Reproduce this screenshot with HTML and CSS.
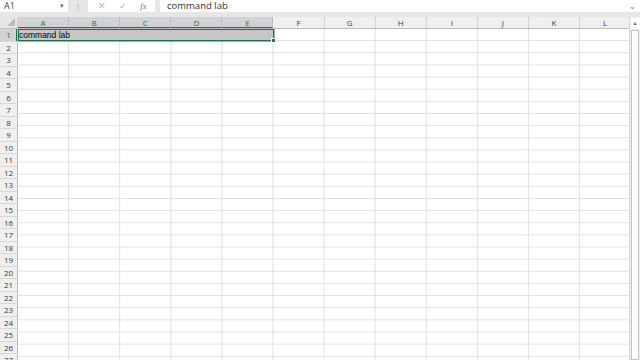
FILE: index.html
```html
<!DOCTYPE html>
<html>
<head>
<meta charset="UTF-8">
<title>Book1 - Excel</title>
<link rel="stylesheet" href="styles.css">
</head>
<body>

	<!-- 수식 입력줄 -->
	<div class="formula-bar">
		<div class="name-box">
			<span>A1</span>
			<span class="name-arrow">&#9662;</span>
		</div>
		<div class="bar-dots">&#8942;</div>
		<div class="bar-buttons">
			<span class="bar-btn">&#10005;</span>
			<span class="bar-btn">&#10003;</span>
			<span class="bar-btn fx">fx</span>
		</div>
		<div class="formula-input">
			<span>command lab</span>
			<span class="expand">&#8964;</span>
		</div>
	</div>

	<div class="band"></div>

	<div class="sheet">
		<div class="corner"><span class="corner-tri"></span></div>

		<div class="col-heads">
			<div class="col-head sel">A</div>
			<div class="col-head sel">B</div>
			<div class="col-head sel">C</div>
			<div class="col-head sel">D</div>
			<div class="col-head sel">E</div>
			<div class="col-head">F</div>
			<div class="col-head">G</div>
			<div class="col-head">H</div>
			<div class="col-head">I</div>
			<div class="col-head">J</div>
			<div class="col-head">K</div>
			<div class="col-head">L</div>
		</div>

		<div class="vscroll">
			<div class="scroll-up">&#9650;</div>
			<div class="scroll-thumb"></div>
		</div>

		<div class="row-heads">
			<div class="row-head sel">1</div>
			<div class="row-head">2</div>
			<div class="row-head">3</div>
			<div class="row-head">4</div>
			<div class="row-head">5</div>
			<div class="row-head">6</div>
			<div class="row-head">7</div>
			<div class="row-head">8</div>
			<div class="row-head">9</div>
			<div class="row-head">10</div>
			<div class="row-head">11</div>
			<div class="row-head">12</div>
			<div class="row-head">13</div>
			<div class="row-head">14</div>
			<div class="row-head">15</div>
			<div class="row-head">16</div>
			<div class="row-head">17</div>
			<div class="row-head">18</div>
			<div class="row-head">19</div>
			<div class="row-head">20</div>
			<div class="row-head">21</div>
			<div class="row-head">22</div>
			<div class="row-head">23</div>
			<div class="row-head">24</div>
			<div class="row-head">25</div>
			<div class="row-head">26</div>
			<div class="row-head">27</div>
		</div>

		<div class="cells">
			<div class="selection">
				<span class="cell-text">command lab</span>
				<span class="fill-handle"></span>
			</div>
		</div>
	</div>

</body>
</html>
```

FILE: styles.css
```css
body {
	margin: 0;
	width: 640px;
	height: 360px;
	overflow: hidden;
	background-color: #fff;
	font-family: "Open Sans", "Liberation Sans", sans-serif;
}

/* ---- 수식 입력줄 ---- */
.formula-bar {
	display: flex;
	height: 12px;
	background-color: #e6e6e6;
}

.name-box {
	width: 68px;
	background-color: #fff;
	display: flex;
	justify-content: space-between;
	align-items: center;
	padding: 0 4px 0 4px;
	box-sizing: border-box;
	font-size: 9px;
	line-height: 12px;
	color: #444;
}

.name-arrow {
	font-size: 7px;
	color: #666;
}

.bar-dots {
	width: 20px;
	text-align: center;
	font-size: 8px;
	line-height: 12px;
	color: #9a9a9a;
}

.bar-buttons {
	width: 67px;
	background-color: #fff;
	display: flex;
	justify-content: space-around;
	align-items: center;
	padding: 0 2px 0 4px;
	box-sizing: border-box;
}

.bar-btn {
	font-size: 9px;
	color: #b4b4b4;
	line-height: 12px;
}

.bar-btn.fx {
	font-family: "Liberation Serif", serif;
	font-style: italic;
	color: #777;
}

.formula-input {
	flex: 1;
	margin-left: 5px;
	background-color: #fff;
	display: flex;
	justify-content: space-between;
	align-items: center;
	padding: 0 4px 0 7px;
	font-size: 9.5px;
	line-height: 12px;
	color: #333;
}

.expand {
	font-size: 8px;
	line-height: 8px;
	color: #777;
}

.band {
	height: 5px;
	background-color: #e6e6e6;
}

/* ---- 시트 ---- */
.sheet {
	display: grid;
	grid-template-columns: 18px 611px 11px;
	grid-template-rows: 12px 331px;
}

.corner {
	background-color: #e6e6e6;
	border-right: solid 1px #cfcfcf;
	border-bottom: solid 1px #bdbdbd;
	box-sizing: border-box;
	position: relative;
}

.corner-tri {
	position: absolute;
	right: 2px;
	bottom: 2px;
	width: 0;
	height: 0;
	border-left: solid 8px transparent;
	border-bottom: solid 8px #b9b9b9;
}

.col-heads {
	display: flex;
	overflow: hidden;
	background-color: #efefef;
	border-bottom: solid 1px #bdbdbd;
	box-sizing: border-box;
}

.col-head {
	flex: 0 0 51.1px;
	box-sizing: border-box;
	border-right: solid 1px #d4d4d4;
	text-align: center;
	font-size: 8px;
	line-height: 11px;
	color: #3a3a3a;
}

.col-head.sel {
	background-color: #d2d2d2;
	color: #217346;
	border-right-color: #bdbdbd;
	border-bottom: solid 1px #217346;
}

.vscroll {
	grid-row: 1 / 3;
	grid-column: 3;
	background-color: #f0f0f0;
	border-left: solid 1px #d6d6d6;
	box-sizing: border-box;
	display: flex;
	flex-direction: column;
	align-items: center;
}

.scroll-up {
	width: 9px;
	height: 11px;
	margin-top: 1px;
	background-color: #fff;
	text-align: center;
	font-size: 5px;
	line-height: 10px;
	color: #606060;
}

.scroll-thumb {
	flex: 1;
	width: 8px;
	margin-top: 1px;
	background-color: #fff;
	border: solid 1px #c2c2c2;
	box-sizing: border-box;
}

.row-heads {
	display: flex;
	flex-direction: column;
	overflow: hidden;
	background-color: #efefef;
	border-right: solid 1px #bdbdbd;
	box-sizing: border-box;
}

.row-head {
	flex: 0 0 12.15px;
	box-sizing: border-box;
	border-bottom: solid 1px #d8d8d8;
	text-align: center;
	font-size: 8px;
	line-height: 11.5px;
	color: #3a3a3a;
}

.row-head.sel {
	background-color: #d2d2d2;
	color: #217346;
	box-shadow: inset -1px 0 0 #217346;
}

.cells {
	overflow: hidden;
	background-image:
		linear-gradient(to right, #e1e1e1 1px, transparent 1px),
		linear-gradient(to bottom, #e1e1e1 1px, transparent 1px);
	background-size: 51.1px 12.15px;
	background-position: -1px -1px;
}

.selection {
	position: relative;
	width: 255.5px;
	height: 12.15px;
	background-color: #c6c6c6;
	box-shadow: inset 0 0 0 1px #217346, 0 0 0 0.5px #217346;
	font-family: "Liberation Sans", sans-serif;
	font-size: 8.5px;
	line-height: 12px;
	color: #000;
	white-space: nowrap;
}

.cell-text {
	padding-left: 1px;
}

.fill-handle {
	position: absolute;
	right: -2px;
	bottom: -2px;
	width: 3px;
	height: 3px;
	background-color: #217346;
	border: solid 1px #fff;
}
```
